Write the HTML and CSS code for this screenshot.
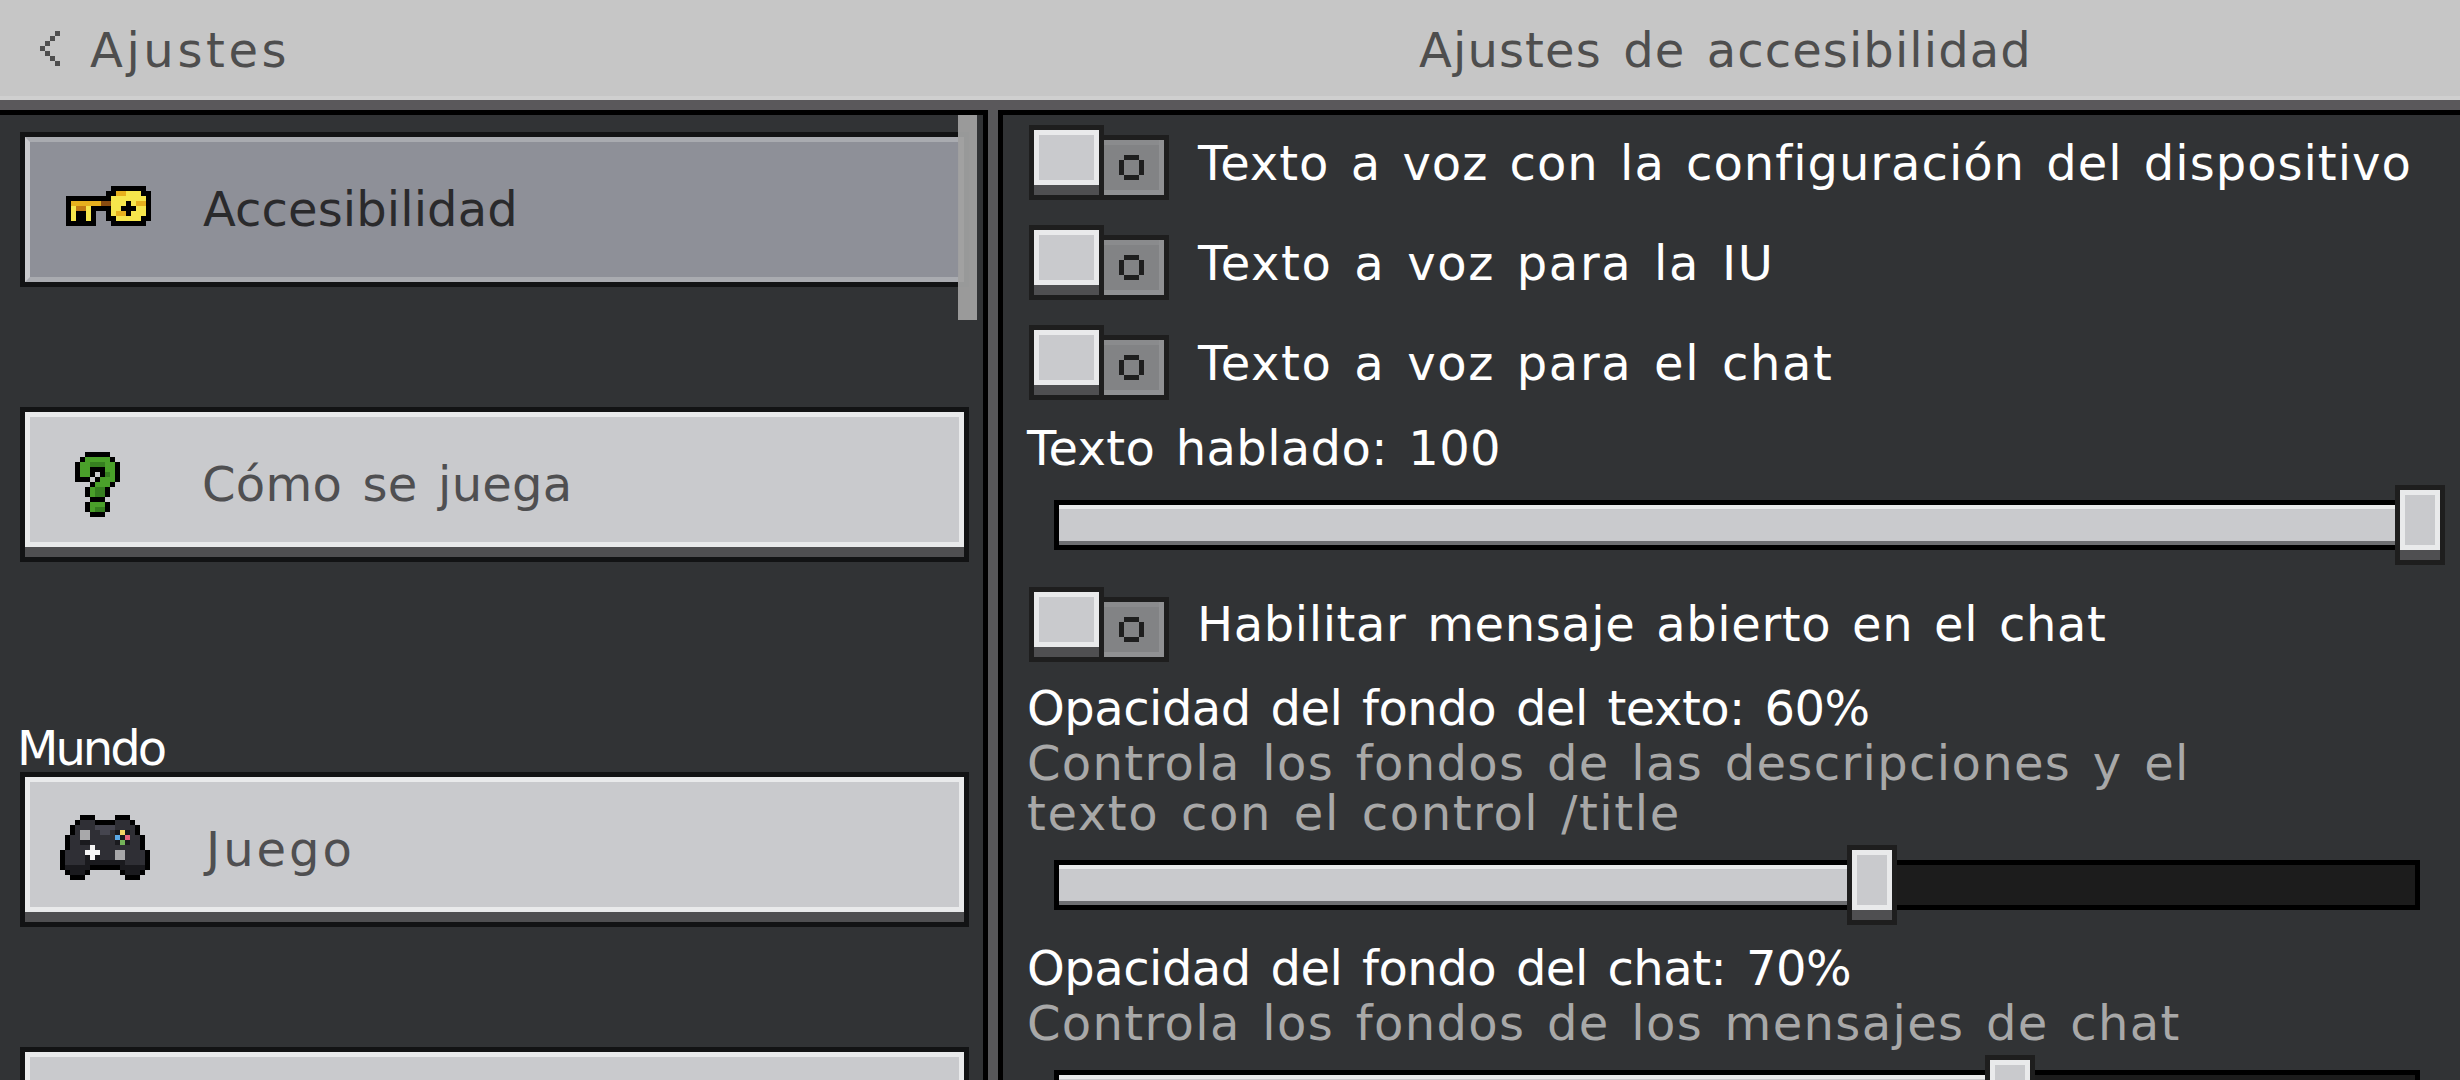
FILE: index.html
```html
<!DOCTYPE html>
<html lang="es">
<head>
    <meta charset="UTF-8">
    <title>Ajustes de accesibilidad</title>
    <link rel="stylesheet" href="styles.css">
</head>
<body>
<svg class="defs" width="0" height="0">
    <symbol id="toggle-o" viewBox="0 0 5 5">
        <path d="M1 0h3v1H1zM0 1h1v3H0zM4 1h1v3H4zM1 4h3v1H1z" fill="#1e1e1e" shape-rendering="crispEdges"/>
    </symbol>
</svg>

<header class="header">
    <div class="header-back">
        <svg class="chevron" viewBox="0 0 4 7" width="20" height="35" shape-rendering="crispEdges">
            <path d="M3 0h1v1H3zM2 1h1v1H2zM1 2h1v1H1zM0 3h1v1H0zM1 4h1v1H1zM2 5h1v1H2zM3 6h1v1H3z" fill="#4e4e4e"/>
        </svg>
        <span class="back-text">Ajustes</span>
    </div>
    <div class="header-title">Ajustes de accesibilidad</div>
</header>
<div class="header-edge"></div>

<main class="main">
    <nav class="side">
        <div class="scrollbar"></div>

        <a class="nav-btn nav-btn-active">
            <div class="nav-face">
                <!-- key -->
                <svg class="nav-icon icon-key" viewBox="0 0 17 8" width="85" height="40" shape-rendering="crispEdges">
                    <path fill="#000" d="M9 0h7v1H9zM8 1h2v1H8zM15 1h2v1h-2zM0 2h9v1H0zM16 2h1v4h-1zM0 3h1v5H0zM8 3h1v3H8zM5 4h3v1H5zM5 5h1v3H5zM2 5h2v2H2zM1 7h4v1H1zM8 6h2v1H8zM15 6h2v1h-2zM9 7h7v1H9zM12 3h1v3h-1zM11 4h3v1h-3z"/>
                    <path fill="#f6e64c" d="M10 1h5v1h-5zM9 2h7v1H9zM9 3h3v1H9zM13 3h3v1h-3zM9 4h2v1H9zM14 4h2v1h-2zM9 5h3v1H9zM13 5h3v1h-3zM10 6h5v1h-5zM1 4h1v3H1zM4 4h1v3H4z"/>
                    <path fill="#e6b01e" d="M1 3h6v1H1zM10 1h2v1h-2zM14 3h2v1h-2zM10 5h2v1h-2z"/>
                    <path fill="#c07a14" d="M2 4h2v1H2z"/>
                    <path fill="#8a4c10" d="M7 3h2v1H7z"/>
                </svg>
                <span class="nav-label">Accesibilidad</span>
            </div>
        </a>

        <a class="nav-btn">
            <div class="nav-face">
                <!-- question mark -->
                <svg class="nav-icon icon-help" viewBox="0 0 9 13" width="45" height="65" shape-rendering="crispEdges">
                    <path fill="#000" d="M2 0h5v1H2zM1 1h1v1H1zM7 1h1v1H7zM0 2h1v3H0zM8 2h1v4H8zM3 3h3v1H3zM3 4h1v1H3zM5 4h1v1H5zM0 5h3v1H0zM4 5h1v1H4zM3 6h1v1H3zM7 6h1v1H7zM2 7h1v2H2zM6 7h1v2H6zM3 9h3v1H3zM2 10h1v2H2zM6 10h1v2H6zM3 12h3v1H3z"/>
                    <path fill="#4aa02a" d="M2 1h5v1H2zM1 2h7v1H1zM1 3h2v1H1zM6 3h2v1H6zM1 4h2v1H1zM6 4h2v1H6zM5 5h3v1H5zM4 6h3v1H4zM3 7h3v2H3zM3 10h3v2H3z"/>
                    <path fill="#367f20" d="M3 2h3v1H3zM6 4h1v1H6zM4 7h2v2H4zM4 11h2v1H4z"/>
                    <path fill="#c9cacd" d="M4 4h1v1H4z"/>
                </svg>
                <span class="nav-label nav-label-howto">Cómo se juega</span>
            </div>
        </a>

        <div class="side-heading">Mundo</div>

        <a class="nav-btn">
            <div class="nav-face">
                <!-- controller -->
                <svg class="nav-icon icon-pad" viewBox="0 0 18 13" width="90" height="65" shape-rendering="crispEdges">
                    <path fill="#000" d="M4 0h3v1H4zM11 0h3v1h-3zM3 1h1v1H3zM7 1h4v1H7zM14 1h1v1h-1zM2 2h1v2H2zM15 2h1v2h-1zM1 4h1v3H1zM16 4h1v3h-1zM0 7h1v4H0zM17 7h1v4h-1zM1 11h1v1H1zM16 11h1v1h-1zM2 12h3v1H2zM13 12h3v1h-3zM5 11h1v1H5zM12 11h1v1h-1zM6 10h6v1H6z"/>
                    <path fill="#2f2f35" d="M4 1h3v1H4zM11 1h3v1h-3zM3 2h12v2H3zM2 4h14v3H2zM1 7h16v3H1z"/>
                    <path fill="#1a1a1e" d="M5 9h8v1H5zM1 10h5v1H1zM12 10h5v1h-5zM2 11h3v1H2zM13 11h3v1h-3zM4 5h2v1H4zM11 3h3v3h-3zM5 7h1v2H5zM7 7h1v2H7z"/>
                    <path fill="#45454f" d="M7 2h4v1H7zM8 3h2v1H8z"/>
                    <path fill="#a8a8aa" d="M4 3h2v2H4zM11 7h2v2h-2z"/>
                    <path fill="#f5f5f5" d="M6 6h1v3H6zM5 7h3v1H5z"/>
                    <path fill="#f3d565" d="M12 3h1v1h-1z"/>
                    <path fill="#5aa9e6" d="M11 4h1v1h-1z"/>
                    <path fill="#e8637f" d="M13 4h1v1h-1z"/>
                    <path fill="#74b35a" d="M12 5h1v1h-1z"/>
                </svg>
                <span class="nav-label nav-label-game">Juego</span>
            </div>
        </a>

        <a class="nav-btn nav-btn-next">
            <div class="nav-face"></div>
        </a>
    </nav>

    <div class="divider"></div>

    <section class="content">
        <div class="toggle-row">
            <div class="toggle"><div class="toggle-thumb"><div class="toggle-face"></div></div><div class="toggle-track"><svg width="25" height="25"><use href="#toggle-o"/></svg></div></div>
            <span class="toggle-text text-device">Texto a voz con la configuración del dispositivo</span>
        </div>
        <div class="toggle-row">
            <div class="toggle"><div class="toggle-thumb"><div class="toggle-face"></div></div><div class="toggle-track"><svg width="25" height="25"><use href="#toggle-o"/></svg></div></div>
            <span class="toggle-text text-voice">Texto a voz para la IU</span>
        </div>
        <div class="toggle-row">
            <div class="toggle"><div class="toggle-thumb"><div class="toggle-face"></div></div><div class="toggle-track"><svg width="25" height="25"><use href="#toggle-o"/></svg></div></div>
            <span class="toggle-text text-voice">Texto a voz para el chat</span>
        </div>

        <div class="setting-label label-spoken">Texto hablado: 100</div>
        <div class="slider slider-plain">
            <div class="slider-track">
                <div class="slider-fill" style="width: 1336px"><div class="slider-thumb"><div class="thumb-face"></div></div></div>
            </div>
        </div>

        <div class="toggle-row toggle-row-open">
            <div class="toggle"><div class="toggle-thumb"><div class="toggle-face"></div></div><div class="toggle-track"><svg width="25" height="25"><use href="#toggle-o"/></svg></div></div>
            <span class="toggle-text text-open">Habilitar mensaje abierto en el chat</span>
        </div>

        <div class="setting-label label-opacity">Opacidad del fondo del texto: 60%</div>
        <p class="setting-desc">Controla los fondos de las descripciones y el<br><span class="desc-wide">texto con el control /title</span></p>
        <div class="slider">
            <div class="slider-track">
                <div class="slider-fill" style="width: 788px"><div class="slider-thumb"><div class="thumb-face"></div></div></div>
            </div>
        </div>

        <div class="setting-label label-chat">Opacidad del fondo del chat: 70%</div>
        <p class="setting-desc">Controla los fondos de los mensajes de chat</p>
        <div class="slider">
            <div class="slider-track">
                <div class="slider-fill" style="width: 926px"><div class="slider-thumb"><div class="thumb-face"></div></div></div>
            </div>
        </div>
    </section>
</main>
</body>
</html>
```

FILE: styles.css
```css
:root {
    --panel: #313335;
    --face: #c9cacd;
    --face-light: #e9eaeb;
    --face-dark: #4f4f51;
    --edge: #121314;
    --edge-soft: #1e1e1e;
}
* {
    box-sizing: border-box;
}
html, body {
    margin: 0;
    height: 1080px;
    overflow: hidden;
}
body {
    display: flex;
    flex-direction: column;
    background: var(--panel);
    color: #fff;
    font-family: "DejaVu Sans", sans-serif;
    font-size: 48px;
    line-height: 50px;
    word-spacing: 5px;
}
.defs {
    position: absolute;
}
.header {
    display: flex;
    align-items: center;
    height: 100px;
    flex: none;
    padding-top: 4px;
    background: #c6c6c6;
    border-bottom: 4px solid #cfcfcf;
    color: #4e4e4e;
}
.header-back {
    display: flex;
    align-items: center;
    gap: 30px;
    width: 1003px;
    padding-left: 40px;
}
.chevron {
    margin-top: -3px;
}
.back-text {
    letter-spacing: 3.6px;
}
.header-title {
    flex: 1;
    padding-right: 12px;
    text-align: center;
    letter-spacing: 1.1px;
}
.header-edge {
    height: 10px;
    flex: none;
    background: #5a585b;
}
.main {
    display: flex;
    flex: 1;
    min-height: 0;
}
.side {
    position: relative;
    width: 988px;
    flex: none;
    padding: 17px 0 0 20px;
    border-top: 5px solid #000;
    border-right: 5px solid #000;
    overflow: hidden;
}
.scrollbar {
    position: absolute;
    top: 0;
    left: 958px;
    width: 19px;
    height: 205px;
    background: #a0a0a0;
    opacity: 0.95;
}
.divider {
    width: 10px;
    flex: none;
    background: #58585a;
}
.nav-btn {
    display: flex;
    width: 949px;
    height: 155px;
    border: 5px solid var(--edge);
    padding-bottom: 10px;
    background: var(--face-dark);
    color: var(--face-dark);
}
.nav-btn + .nav-btn {
    margin-top: 120px;
}
.nav-face {
    display: flex;
    align-items: center;
    flex: 1;
    border: 5px solid var(--face-light);
    background: var(--face);
}
.nav-btn-active {
    padding-bottom: 0;
    color: #2a2a2c;
}
.nav-btn-active .nav-face {
    border-color: #a9abb0;
    border-left-color: #c9cacd;
    background: #8e9098;
}
.nav-icon {
    flex: none;
}
.icon-key {
    margin-left: 36px;
    margin-right: 54px;
    margin-bottom: 7px;
}
.icon-help {
    margin-left: 45px;
    margin-right: 84px;
    margin-top: 10px;
}
.icon-pad {
    margin-left: 30px;
    margin-right: 54px;
    margin-top: 6px;
}
.nav-label {
    margin-left: -2px;
    margin-bottom: 2px;
    letter-spacing: 0.1px;
}
.nav-label-howto {
    margin-bottom: 0;
    margin-top: 8px;
    letter-spacing: 0.25px;
}
.nav-label-game {
    margin-left: 2px;
    margin-bottom: 0;
    margin-top: 8px;
    letter-spacing: 3px;
}
.side-heading {
    height: 48px;
    line-height: 48px;
    margin-top: 162px;
    margin-left: -3px;
    color: #fff;
    letter-spacing: -3px;
}
.nav-btn-next {
    margin-top: 120px;
}
.content {
    flex: 1;
    min-width: 0;
    padding: 10px 0 0 26px;
    border-top: 5px solid #000;
    border-left: 5px solid #000;
    overflow: hidden;
}
.toggle-row {
    display: flex;
    align-items: center;
    gap: 29px;
    height: 75px;
}
.toggle-row + .toggle-row {
    margin-top: 25px;
}
.toggle-row-open {
    margin-top: 22px;
}
.toggle {
    display: flex;
    align-items: flex-end;
    width: 140px;
    height: 75px;
    flex: none;
}
.toggle-thumb {
    width: 75px;
    height: 75px;
    border: 5px solid var(--edge-soft);
    padding-bottom: 10px;
    background: var(--face-dark);
}
.toggle-face {
    height: 100%;
    border: 5px solid var(--face-light);
    background: var(--face);
}
.toggle-track {
    display: flex;
    align-items: center;
    justify-content: center;
    width: 65px;
    height: 65px;
    border: 5px solid var(--edge-soft);
    border-left: none;
    padding-right: 5px;
    background: #828385;
    box-shadow: inset -5px -5px 0 #909193, inset 0 5px 0 #8a8b8d;
}
.toggle-text {
    margin-top: 1px;
}
.text-device {
    letter-spacing: 1px;
}
.text-voice {
    letter-spacing: 1.6px;
}
.text-open {
    margin-top: -2px;
    margin-left: -1px;
    letter-spacing: 0.6px;
}
.setting-label {
    height: 50px;
    margin-left: -2px;
}
.label-spoken {
    margin-top: 23px;
    letter-spacing: 0.35px;
}
.label-opacity {
    margin-top: 21px;
    letter-spacing: -0.5px;
}
.label-chat {
    margin-top: 18px;
    letter-spacing: -0.5px;
}
.setting-desc {
    margin: 5px 0 0 -2px;
    color: #a8a8a8;
    letter-spacing: 1.35px;
}
.desc-wide {
    letter-spacing: 1.6px;
}
.slider {
    height: 80px;
    margin: 7px 0 0 25px;
    padding-top: 15px;
}
.slider-plain {
    margin-top: 12px;
}
.slider-track {
    width: 1366px;
    height: 50px;
    border: 5px solid #000;
    background: #1c1c1c;
}
.slider-fill {
    position: relative;
    height: 40px;
    border-top: 4px solid var(--face-light);
    border-bottom: 4px solid #6e6f72;
    background: var(--face);
}
.slider-thumb {
    position: absolute;
    top: -24px;
    left: 100%;
    width: 50px;
    height: 80px;
    border: 5px solid var(--edge-soft);
    padding-bottom: 10px;
    background: var(--face-dark);
}
.thumb-face {
    height: 100%;
    border: 5px solid var(--face-light);
    background: var(--face);
}
```
